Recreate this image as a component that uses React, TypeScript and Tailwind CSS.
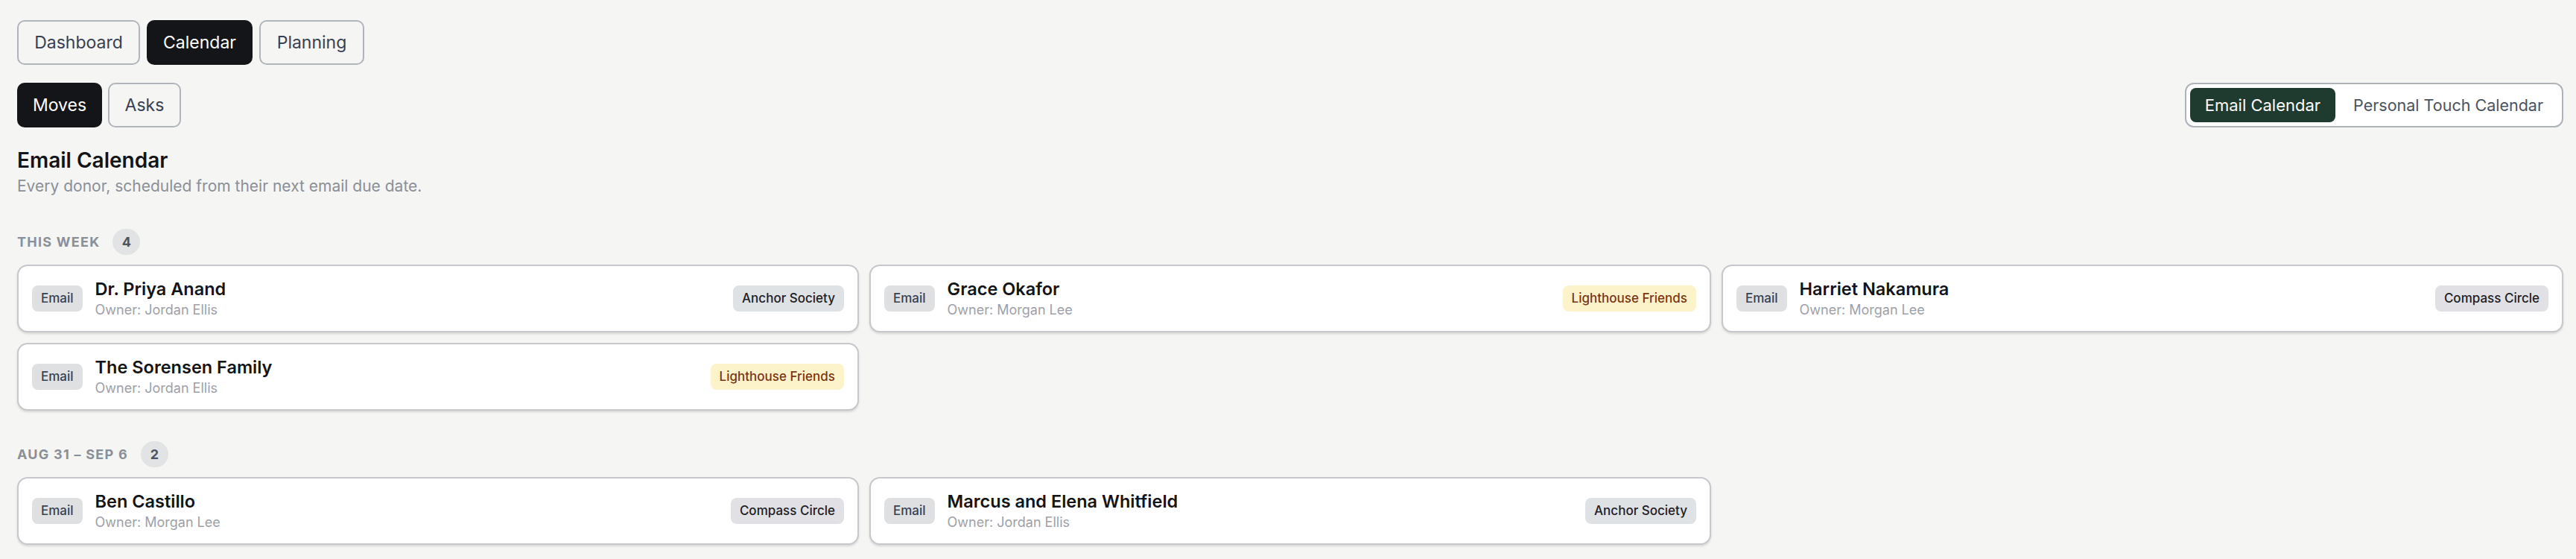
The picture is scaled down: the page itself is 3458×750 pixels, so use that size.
import React from 'react';

type Tier = 'Anchor Society' | 'Lighthouse Friends' | 'Compass Circle';

type Donor = {
  name: string;
  owner: string;
  tier: Tier;
};

const TIER_STYLES: Record<Tier, string> = {
  'Anchor Society': 'bg-[#dfe2e5] text-[#1c2026]',
  'Lighthouse Friends': 'bg-[#fdf3cb] text-[#7a3512]',
  'Compass Circle': 'bg-[#e1e1e5] text-[#1c2026]',
};

const sections: { label: string; donors: Donor[] }[] = [
  {
    label: 'This week',
    donors: [
      { name: 'Dr. Priya Anand', owner: 'Jordan Ellis', tier: 'Anchor Society' },
      { name: 'Grace Okafor', owner: 'Morgan Lee', tier: 'Lighthouse Friends' },
      { name: 'Harriet Nakamura', owner: 'Morgan Lee', tier: 'Compass Circle' },
      { name: 'The Sorensen Family', owner: 'Jordan Ellis', tier: 'Lighthouse Friends' },
    ],
  },
  {
    label: 'Aug 31 – Sep 6',
    donors: [
      { name: 'Ben Castillo', owner: 'Morgan Lee', tier: 'Compass Circle' },
      { name: 'Marcus and Elena Whitfield', owner: 'Jordan Ellis', tier: 'Anchor Society' },
    ],
  },
];

function TabButton({ label, width, active }: { label: string; width: string; active?: boolean }) {
  return (
    <button
      className={`${width} h-[60px] flex items-center justify-center rounded-[10px] border-2 text-[23px] ${
        active
          ? 'border-[#141518] bg-[#141518] text-white'
          : 'border-[#b0b5bc] bg-transparent text-[#374151]'
      }`}
    >
      {label}
    </button>
  );
}

function DonorCard({ donor }: { donor: Donor }) {
  return (
    <div className="h-[91px] flex items-center bg-white border-2 border-[#c6c8cc] rounded-[14px] px-[18px] shadow-[0_2px_3px_rgba(0,0,0,0.12)]">
      <span className="h-[35px] px-[12px] flex items-center rounded-[8px] bg-[#dfe0e2] text-[#374151] text-[17px] font-medium">
        Email
      </span>
      <div className="ml-[17px] flex flex-col gap-[1px] flex-1 min-w-0">
        <div className="text-[23.5px] leading-[30px] font-semibold text-[#131417]">{donor.name}</div>
        <div className="text-[18px] leading-[24px] text-[#9ca1a9]">Owner: {donor.owner}</div>
      </div>
      <span
        className={`h-[35px] px-[12px] flex items-center rounded-[8px] text-[17px] font-medium ${TIER_STYLES[donor.tier]}`}
      >
        {donor.tier}
      </span>
    </div>
  );
}

export default function App() {
  return (
    <div
      className="min-h-screen bg-[#f5f5f3] pl-[23px] pr-[17px] pt-[27px] pb-[20px]"
      style={{ fontFamily: 'Inter, "Noto Sans", sans-serif' }}
    >
      <div className="flex gap-[9px]">
        <TabButton label="Dashboard" width="w-[165px]" />
        <TabButton label="Calendar" width="w-[142px]" active />
        <TabButton label="Planning" width="w-[141px]" />
      </div>

      <div className="mt-[24px] flex items-center justify-between">
        <div className="flex gap-[8px]">
          <TabButton label="Moves" width="w-[114px]" active />
          <TabButton label="Asks" width="w-[98px]" />
        </div>
        <div className="h-[60px] flex items-center gap-[4px] p-[5px] bg-white border-2 border-[#aeb3ba] rounded-[12px]">
          <button className="h-full px-[20px] rounded-[8px] bg-[#1f3a2f] text-white text-[22px]">
            Email Calendar
          </button>
          <button className="h-full px-[20px] rounded-[8px] text-[#4b5260] text-[21.5px]">
            Personal Touch Calendar
          </button>
        </div>
      </div>

      <h1 className="mt-[26px] text-[28px] leading-[36px] font-semibold text-[#131417]">Email Calendar</h1>
      <p className="mt-[2px] text-[21px] leading-[30px] text-[#8a8f98]">
        Every donor, scheduled from their next email due date.
      </p>

      <div className="mt-[42px] flex flex-col gap-[41px]">
        {sections.map((section) => (
          <section key={section.label}>
            <div className="flex items-center gap-[17px] h-[35px]">
              <span className="text-[18px] font-bold uppercase tracking-[0.07em] text-[#8a8f98]">
                {section.label}
              </span>
              <span className="h-[35px] min-w-[37px] px-[8px] flex items-center justify-center rounded-full bg-[#e2e3e5] text-[#4b5563] text-[18px] font-bold">
                {section.donors.length}
              </span>
            </div>
            <div className="mt-[13px] grid grid-cols-3 gap-x-[14px] gap-y-[14px]">
              {section.donors.map((donor) => (
                <DonorCard key={donor.name} donor={donor} />
              ))}
            </div>
          </section>
        ))}
      </div>
    </div>
  );
}
